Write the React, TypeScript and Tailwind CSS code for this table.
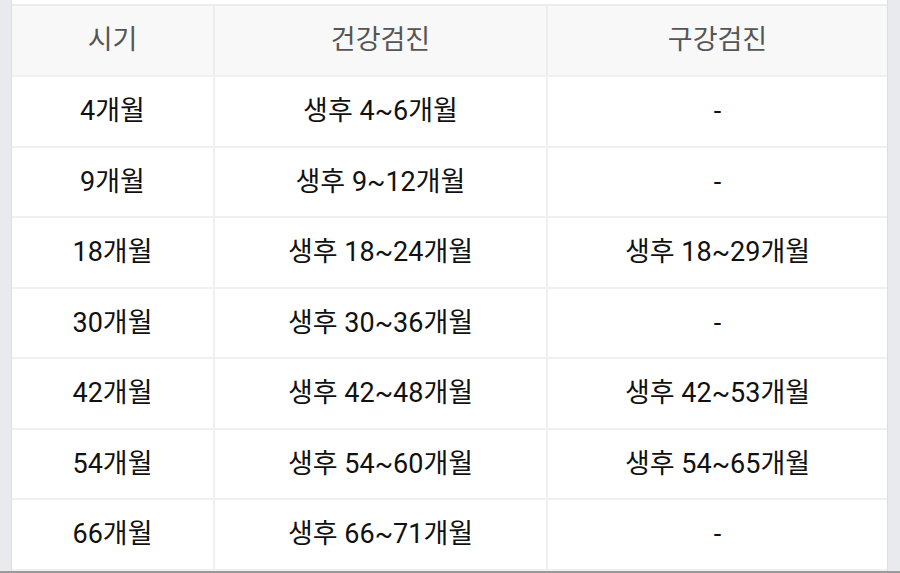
const rows: [string, string, string][] = [
  ["4개월", "생후 4~6개월", "-"],
  ["9개월", "생후 9~12개월", "-"],
  ["18개월", "생후 18~24개월", "생후 18~29개월"],
  ["30개월", "생후 30~36개월", "-"],
  ["42개월", "생후 42~48개월", "생후 42~53개월"],
  ["54개월", "생후 54~60개월", "생후 54~65개월"],
  ["66개월", "생후 66~71개월", "-"],
];

export default function App() {
  return (
    <div
      className="w-[900px] h-[573px] overflow-hidden bg-[#e8eaed] flex flex-col"
      style={{ fontFamily: "Roboto, 'Noto Sans CJK KR', sans-serif" }}
    >
      <div className="flex flex-1 min-h-0">
        <div className="w-[12px] border-r border-[#dcdee1]" />
        <div className="w-[875px] bg-white flex flex-col">
          <div className="h-[4px] bg-white" />
          <div className="grid grid-cols-[203px_333px_1fr] border-t-2 border-[#ececec] bg-[#f8f8f8] h-[71px] text-[27px] text-[#555]">
            <div className="flex items-center justify-center border-r-2 border-[#ececec]">시기</div>
            <div className="flex items-center justify-center border-r-2 border-[#ececec]">건강검진</div>
            <div className="flex items-center justify-center">구강검진</div>
          </div>
          {rows.map((r, i) => (
            <div
              key={i}
              className="grid grid-cols-[203px_333px_1fr] border-t-2 border-[#f0f0f0] h-[70.5px] text-[27px] text-[#111]"
            >
              <div className="flex items-center justify-center border-r-2 border-[#f0f0f0]">{r[0]}</div>
              <div className="flex items-center justify-center border-r-2 border-[#f0f0f0]">{r[1]}</div>
              <div className="flex items-center justify-center">{r[2]}</div>
            </div>
          ))}
          <div className="flex-1 border-t-2 border-[#f0f0f0]" />
        </div>
        <div className="flex-1 border-l border-[#dcdee1]" />
      </div>
      <div className="h-[2px] bg-[#9a9a9a]" />
    </div>
  );
}
